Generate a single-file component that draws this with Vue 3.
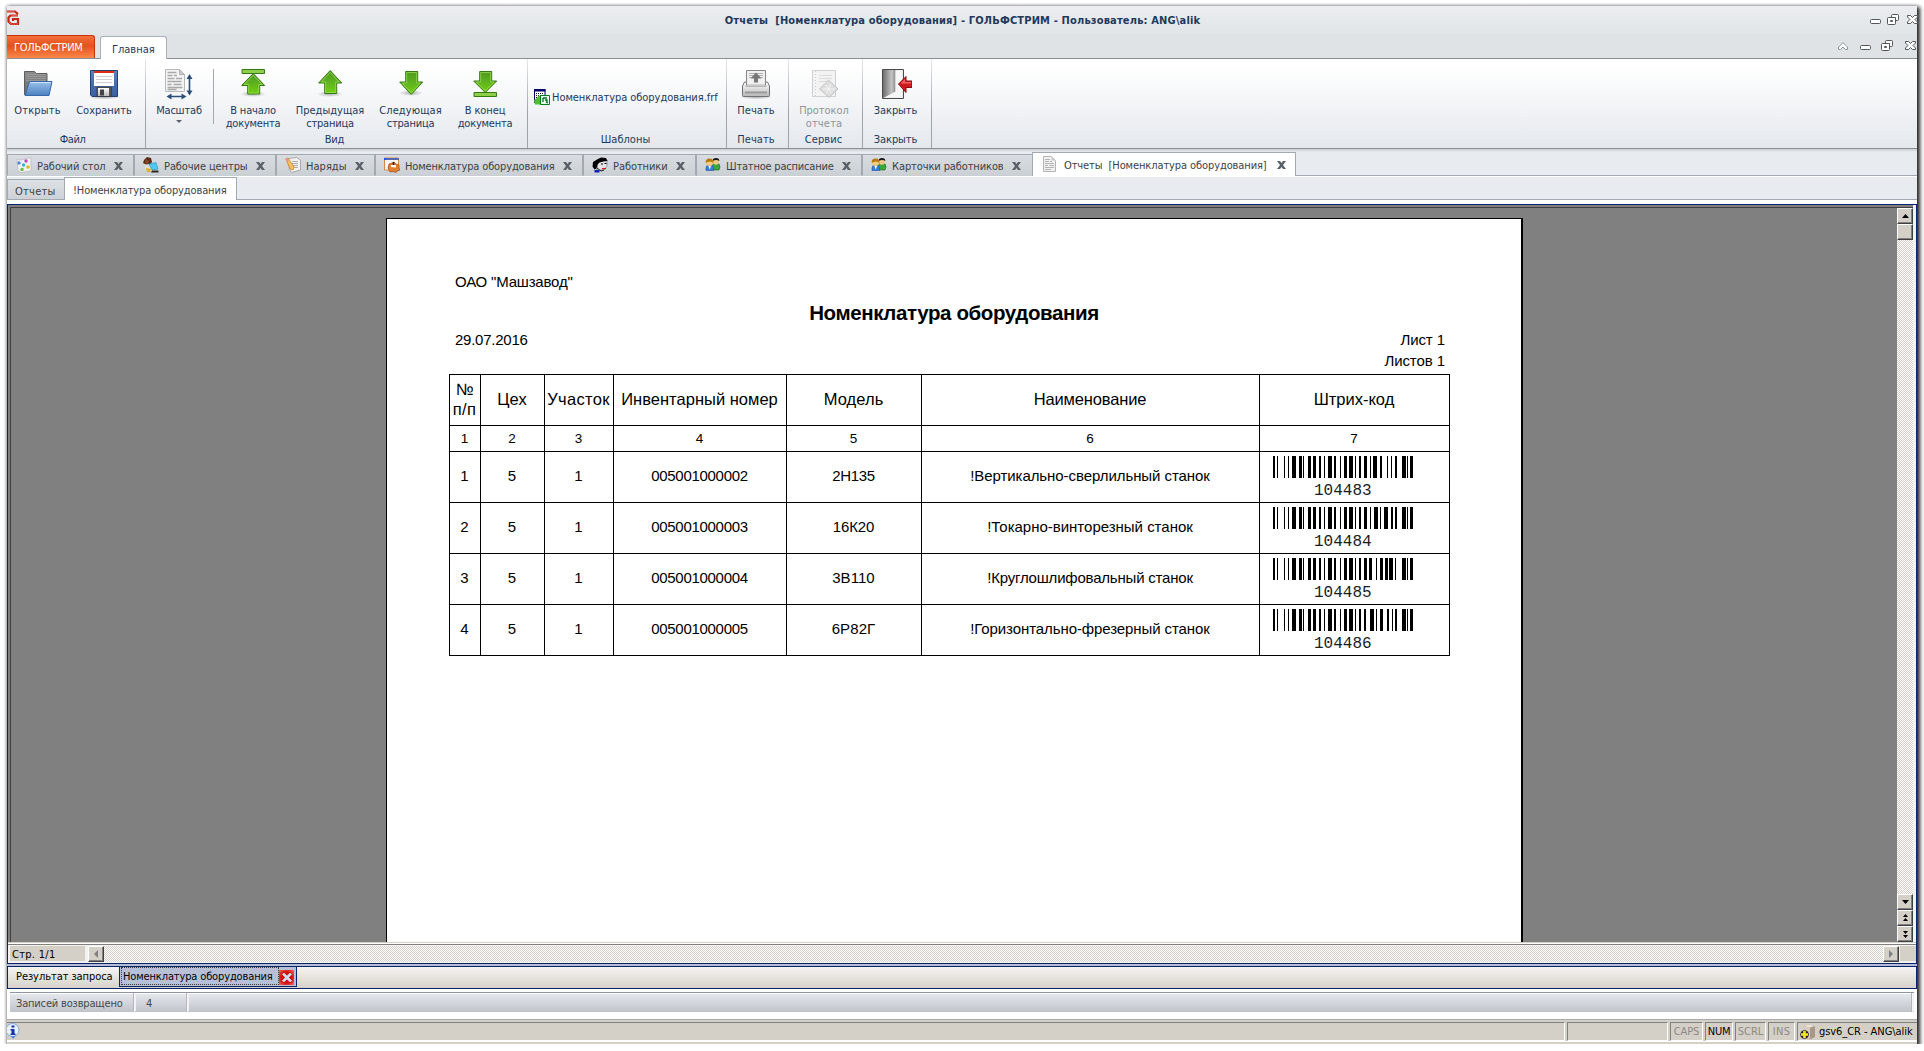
<script setup>
// Spreads the letters of a label so that it takes the given width in pixels.
function fitText(el, { value }) {
  if (!value) return
  el.style.letterSpacing = '0px'
  const count = el.textContent.length
  const natural = el.getBoundingClientRect().width
  const step = (value + 0.6 - natural) / count
  el.style.letterSpacing = step.toFixed(3) + 'px'
}
const vFit = { mounted: fitText }

const groups = [
  {
    id: 'file', label: 'Файл', fit: 25, labelWidth: 131, width: 139,
    buttons: [
      { icon: 'open', width: 61, lines: [['Открыть', 46]] },
      { icon: 'save', width: 72, lines: [['Сохранить', 55]] },
    ],
  },
  {
    id: 'view', label: 'Вид', fit: 19, labelWidth: 377, width: 382,
    buttons: [
      { icon: 'scale', width: 66, lines: [['Масштаб', 45]], drop: true },
      { icon: 'first', width: 76, lines: [['В начало', 45], ['документа', 54]], split: true },
      { icon: 'prev', width: 78, lines: [['Предыдущая', 68], ['страница', 47]] },
      { icon: 'next', width: 83, lines: [['Следующая', 62], ['страница', 47]] },
      { icon: 'last', width: 66, lines: [['В конец', 40], ['документа', 54]] },
    ],
  },
  { id: 'tpl', label: 'Шаблоны', fit: 49, labelWidth: 195, width: 199, buttons: [], template: 'Номенклатура оборудования.frf' },
  { id: 'print', label: 'Печать', fit: 37, labelWidth: 58, width: 62, buttons: [{ icon: 'print', width: 58, lines: [['Печать', 37]] }] },
  {
    id: 'service', label: 'Сервис', fit: 37, labelWidth: 69, width: 74,
    buttons: [{ icon: 'log', width: 70, disabled: true, lines: [['Протокол', 49], ['отчета', 36]] }],
  },
  { id: 'close', label: 'Закрыть', fit: 43, labelWidth: 65, width: 69, buttons: [{ icon: 'exit', width: 65, lines: [['Закрыть', 43]] }] },
]

const tabs = [
  { icon: 'desk', title: 'Рабочий стол', fit: 68, width: 128 },
  { icon: 'centers', title: 'Рабочие центры', fit: 83, width: 142 },
  { icon: 'orders', title: 'Наряды', fit: 40, width: 99 },
  { icon: 'nomen', title: 'Номенклатура оборудования', fit: 149, width: 208 },
  { icon: 'worker', title: 'Работники', fit: 54, width: 113 },
  { icon: 'people', title: 'Штатное расписание', fit: 107, width: 166 },
  { icon: 'people', title: 'Карточки работников', fit: 111, width: 169 },
  { icon: 'doc', title: 'Отчеты  [Номенклатура оборудования]', fit: 202, width: 264, active: true },
]

const columns = [
  ['№', 17, 'п/п', 23],
  ['Цех', 29],
  ['Участок', 62],
  ['Инвентарный номер', 156],
  ['Модель', 59],
  ['Наименование', 112],
  ['Штрих-код', 80],
]

const head = [[0, 2], [4, 1], [11, 1], [15, 1], [19, 4], [26, 3], [30, 1], [35, 3], [40, 3], [46, 2], [51, 1], [55, 4], [61, 2], [67, 1], [71, 3], [76, 4], [82, 1], [86, 2]]
const tail = [[129, 4], [134, 1], [137, 3]]
const rows = [
  { model: '2Н135', mf: 42, inv: '005001000002', name: '!Вертикально-сверлильный станок', nf: 239, code: '104483', bars: [[91, 3], [97, 1], [100, 4], [107, 2], [114, 1], [118, 1], [122, 2]] },
  { model: '16К20', mf: 41, inv: '005001000003', name: '!Токарно-винторезный станок', nf: 205, code: '104484', bars: [[91, 3], [97, 1], [101, 4], [107, 1], [111, 4], [118, 2], [122, 2]] },
  { model: '3В110', mf: 42, inv: '005001000004', name: '!Круглошлифовальный станок', nf: 205, code: '104485', bars: [[91, 3], [96, 3], [103, 1], [107, 3], [112, 3], [116, 4], [122, 1]] },
  { model: '6Р82Г', mf: 43, inv: '005001000005', name: '!Горизонтально-фрезерный станок', nf: 239, code: '104486', bars: [[91, 2], [97, 4], [103, 1], [107, 3], [114, 2], [119, 1], [122, 2]] },
]
const barPath = (bars) => [...head, ...bars, ...tail].map(([x, w]) => `M${x} 0h${w}v22h-${w}z`).join('')
</script>

<template>
  <div class="window">
    <svg class="sprite" width="0" height="0">
      <defs>
        <linearGradient id="green" x1="0" y1="0" x2="0" y2="1"><stop offset="0" stop-color="#4f9a1c" /><stop offset=".45" stop-color="#5db01f" /><stop offset="1" stop-color="#72d010" /></linearGradient>
        <linearGradient id="blue" x1="0" y1="0" x2="0" y2="1"><stop offset="0" stop-color="#9cc2ec" /><stop offset="1" stop-color="#4a80c0" /></linearGradient>
        <linearGradient id="grey" x1="0" y1="0" x2="0" y2="1"><stop offset="0" stop-color="#8c8c8c" /><stop offset="1" stop-color="#6c6c6c" /></linearGradient>
        <linearGradient id="light" x1="0" y1="0" x2="0" y2="1"><stop offset="0" stop-color="#ffffff" /><stop offset="1" stop-color="#b8b8b8" /></linearGradient>
        <linearGradient id="door" x1="0" y1="0" x2="1" y2="0"><stop offset="0" stop-color="#6e6e6e" /><stop offset=".7" stop-color="#c4c4c4" /><stop offset="1" stop-color="#8a8a8a" /></linearGradient>
        <linearGradient id="disk" x1="0" y1="0" x2="0" y2="1"><stop offset="0" stop-color="#5a80bd" /><stop offset="1" stop-color="#3a5f9f" /></linearGradient>
        <radialGradient id="shade"><stop offset="0" stop-color="#000" stop-opacity=".3" /><stop offset="1" stop-color="#000" stop-opacity="0" /></radialGradient>
      </defs>
      <symbol id="i-open" viewBox="0 0 32 32">
        <path d="M2.500 26.500V3.500h10l2 2h10.500v21z" fill="url(#grey)" stroke="#5e5e5e" />
        <path d="M4 6.500h20M4 8.500h20M4 10.500h20M4 12.500h20" stroke="#a0a0a0" stroke-width=".7" />
        <path d="M7.500 13.500h22.500l-3 14H3z" fill="url(#blue)" stroke="#3868a8" />
        <path d="M8.300 14.500h20.500" stroke="#cfe2f8" />
      </symbol>
      <symbol id="i-save" viewBox="0 0 32 32">
        <ellipse cx="16" cy="29" rx="16" ry="2.500" fill="url(#shade)" />
        <path d="M2.500 2.500h27v26H4l-1.500-1.500z" fill="url(#disk)" stroke="#26406f" />
        <path d="M6 3h20v15H6z" fill="#fdfdfd" /><path d="M6 3h20v2H6z" fill="#e02a10" />
        <path d="M8 8.500h16M8 11.500h16M8 14.500h16" stroke="#cfcfcf" />
        <path d="M9 19h14.500v9.500H9z" fill="#555" stroke="#333" stroke-width=".6" /><path d="M10 20h11v8H10z" fill="url(#light)" /><path d="M12 21.500h4v6h-4z" fill="#444" />
      </symbol>
      <symbol id="i-scale" viewBox="0 0 32 32">
        <path d="M2.500 1.500h14l5 5v17h-19z" fill="#f4f4f4" stroke="#b8b8b8" /><path d="M16.500 1.500v5h5z" fill="#ccc" stroke="#b0b0b0" />
        <path d="M4.500 4.500h9M4.500 7.500h5M11 7.500h3M4.500 10.500h7M13 10.500h6M4.500 13.500h14M4.500 16.500h4M10.500 16.500h8M4.500 19.500h15M4.500 21.500h9" stroke="#a8a8a8" stroke-width="1.500" />
        <path d="M26.500 9v16M7 28.500h13" stroke="#2c4f78" stroke-width="1.600" />
        <path d="M26.500 6l3 5h-6zM26.500 27.500l3-5h-6zM3.500 28.500l5-3v6zM23.500 28.500l-5-3v6z" fill="#2c4f78" />
      </symbol>
      <symbol id="i-first" viewBox="0 0 32 32">
        <ellipse cx="16" cy="26" rx="13" ry="3" fill="url(#shade)" />
        <path d="M5 1.500h22.500v4H5z" fill="#8fce48" stroke="#347a12" />
        <path d="M16.200 5.500l11.500 12h-5v8.500h-12v-8.500h-6z" fill="url(#green)" stroke="#347a12" />
        <path d="M16.200 7.200l9 9.300h-3.500v8.500h-10v-8.500h-4.500z" fill="none" stroke="#a4dc62" stroke-width=".7" />
      </symbol>
      <symbol id="i-prev" viewBox="0 0 32 32">
        <ellipse cx="16" cy="26" rx="13" ry="3" fill="url(#shade)" />
        <path d="M16.200 2.500l11.500 12.500h-5v10.500h-12v-10.500h-6z" fill="url(#green)" stroke="#347a12" />
        <path d="M16.200 4.200l9 9.800h-3.500v10.500h-10v-10.500h-4.500z" fill="none" stroke="#a4dc62" stroke-width=".7" />
      </symbol>
      <symbol id="i-next" viewBox="0 0 32 32">
        <ellipse cx="16" cy="25" rx="12" ry="3" fill="url(#shade)" />
        <path d="M16.200 26.500l11.500-12.500h-5v-10.500h-12v10.500h-6z" fill="url(#green)" stroke="#347a12" />
        <path d="M16.200 24.800l9-9.800h-3.500v-10.500h-10v10.500h-4.500z" fill="none" stroke="#a4dc62" stroke-width=".7" />
      </symbol>
      <symbol id="i-last" viewBox="0 0 32 32">
        <path d="M16.200 24.500l11.500-11.500h-5v-9.500h-12v9.500h-6z" fill="url(#green)" stroke="#347a12" />
        <path d="M16.200 22.800l9-8.800h-3.500v-9.500h-10v9.500h-4.500z" fill="none" stroke="#a4dc62" stroke-width=".7" />
        <path d="M5 24.500h22.500v4H5z" fill="#8fce48" stroke="#347a12" />
      </symbol>
      <symbol id="i-print" viewBox="0 0 32 32">
        <ellipse cx="16" cy="29" rx="16" ry="2.500" fill="url(#shade)" />
        <path d="M4.500 14h23l2 4v9.500q0 1-1 1h-25q-1 0-1-1V18z" fill="url(#light)" stroke="#707070" />
        <path d="M6.500 2.500h19v15h-19z" fill="#f0f0f0" stroke="#858585" />
        <path d="M9 5.500h14M9 7.500h14M9 9.500h14" stroke="#b0b0b0" />
        <path d="M16 4.500l5.500 6h-3.500v4h-4v-4h-3.500z" fill="#777" />
        <path d="M6 17h20v1.500H6z" fill="#ddd" stroke="#999" stroke-width=".6" /><path d="M5 23.500h22v2H5z" fill="#999" />
      </symbol>
      <symbol id="i-log" viewBox="0 0 32 32">
        <path d="M4.500 2.500h23v26h-23z" fill="#f3f3f3" stroke="#d0d0d0" /><path d="M7.500 3v25" stroke="#d0d0d0" stroke-dasharray="1 2" />
        <path d="M11 7.500h13M11 10.500h13M11 13.500h8" stroke="#dcdcdc" />
        <path d="M20.500 12l9.500 9-9 8.500L11.500 21z" fill="#dedede" stroke="#c2c2c2" /><path d="M15 21h11.500M18 17l5 8M23 16l-5 10" stroke="#f5f5f5" />
      </symbol>
      <symbol id="i-exit" viewBox="0 0 32 32">
        <path d="M2.500 1.500h21v29h-21z" fill="#e8e8e8" stroke="#4a4a4a" /><path d="M3 2h12.500v22L3 30z" fill="url(#door)" /><path d="M15.500 2.500h6.500v27H5l10.500-6z" fill="#f6f6f6" />
        <path d="M18.500 16l7.500-7.500v4.500h6v6.500H26v5z" fill="#d01820" stroke="#8a0c10" /><path d="M20.500 15.500l4.500-4.500v3h6v1.500z" fill="#f06060" />
      </symbol>
      <symbol id="i-tpl" viewBox="0 0 16 16">
        <path d="M.5.5h10.500v13H.5z" fill="#fff" stroke="#00006e" /><path d="M0 0h11.500v2.500H0z" fill="#00006e" />
        <path d="M2 4.500h8M2 6.500h8M2 8.500h8" stroke="#111" stroke-dasharray="1 1" />
        <path d="M0 11l3-2 2-3 2 3v6.500H1z" fill="#4cc030" /><path d="M6.500 6.500h9v9h-9z" fill="#e8ffe8" stroke="#008020" /><path d="M9 9h4M9 9v4M11 11h2v2M12 13l2 1" stroke="#00762a" fill="none" stroke-width="1.300" />
      </symbol>
      <symbol id="i-desk" viewBox="0 0 16 16">
        <path d="M1 2l4 1 10-2.500V14L5 15.500 2 14z" fill="#f1f1f3" stroke="#bdbdc2" stroke-width=".8" />
        <circle cx="10" cy="4" r="1.700" fill="#c048c0" /><circle cx="3" cy="6" r="1.700" fill="#5088e0" /><circle cx="7.500" cy="8" r="1.700" fill="#30b8d8" /><circle cx="12" cy="10" r="1.700" fill="#d8b820" /><circle cx="6" cy="12.500" r="1.800" fill="#70c040" />
      </symbol>
      <symbol id="i-centers" viewBox="0 0 16 16">
        <path d="M1 3l3-3 4 1 1 4-2 3H4L0 6z" fill="#5a2c18" /><path d="M3 2l3 2-1 3-3-1z" fill="#8a4a28" /><path d="M1 8l5-1 3 4-1 3H3z" fill="#ddd" /><path d="M3 11l5 1-1 3H4z" fill="#e0b020" />
        <path d="M6 7l7-1.500L15 12l-6 1z" fill="#50c8f0" stroke="#2090c0" stroke-width=".6" /><path d="M9 13.500h6.500v2H8z" fill="#2a2a2a" />
      </symbol>
      <symbol id="i-orders" viewBox="0 0 16 16">
        <path d="M3.500 1.500l8-1 4 2.500v10l-9 2.500-2-3z" fill="#f2f2f2" stroke="#999" stroke-width=".8" /><path d="M7 4.500h6M7 6.500h6M8 8.500h5M9 10.500h4" stroke="#999" stroke-width=".8" />
        <path d="M1 2l2-1 6 9-1 3-3-1z" fill="#f4c060" stroke="#c07820" stroke-width=".7" /><path d="M0 2l2-1.500L4 3 2 4.500z" fill="#f09090" />
      </symbol>
      <symbol id="i-nomen" viewBox="0 0 16 16">
        <path d="M.5 1h14v12H.5z" fill="#f7f7f7" stroke="#d08848" /><path d="M0 1h15v2H0z" fill="#5868b0" /><path d="M0 1h2v2H0z" fill="#2050f0" />
        <path d="M5 7l3-1 2-1 2 2 3 1v3l1 2-3 1-1 1.500-3-1-3 .5-1-2-1-2z" fill="#e08030" stroke="#a04818" stroke-width=".7" /><path d="M9.500 5v5" stroke="#222" stroke-width="1.500" /><path d="M7 8v2l5 .5V8" fill="#fff" />
      </symbol>
      <symbol id="i-worker" viewBox="0 0 16 16">
        <path d="M6 4l9-1v6l-3 4H5z" fill="#e4e4e4" stroke="#555" stroke-width=".5" />
        <path d="M1 5l4-2.500L9 .5l5 .5 1.500 3-4 .5-4 1-2 2-1 4-2 1-2-3zM9 6.500h2v1H9zM12.500 6h2v1h-2z" fill="#000" /><path d="M10 11h4v1.200h-4z" fill="#c02020" /><path d="M5 11l4 3 3-1" fill="none" stroke="#222" /><path d="M2.500 13h5v2.500h-5z" fill="#1020b0" />
      </symbol>
      <symbol id="i-people" viewBox="0 0 16 16">
        <path d="M7 9.500q0-3.500 4-3.500t4 4l-1 3H8z" fill="#38a838" stroke="#186818" stroke-width=".6" /><circle cx="11" cy="4.800" r="3" fill="#f0c888" /><path d="M7.500 4q0-3 3.500-3t3.300 3q-3-2-6.800 0z" fill="#181818" />
        <path d="M1 13.500V11q0-3 3.500-3.500T8.500 11v2.500z" fill="#3880d8" stroke="#1850a0" stroke-width=".6" /><circle cx="4.500" cy="5.500" r="3.500" fill="#f4cc80" /><path d="M.7 6q-.5-4.500 3.800-4.500T8.300 6q-3-3-7.600 0z" fill="#b87810" /><path d="M3.500 9l1.200 3.500L6 9z" fill="#fff" />
      </symbol>
      <symbol id="i-doc" viewBox="0 0 16 16">
        <path d="M1.500.5h8l4 4v11h-12z" fill="#f1f1f1" stroke="#b4b4b4" /><path d="M9.500.5v4h4z" fill="#ccc" /><path d="M3 3.500h5M3 5.500h4M8 5.500h2M3 7.500h9M3 9.500h3M7.500 9.500h4.500M3 11.500h9M3 13.500h6" stroke="#b4b4b4" />
      </symbol>
      <symbol id="i-x" viewBox="0 0 9 8"><path d="M0 0h3l1.500 2L6 0h3L6 4l3 4H6L4.500 6 3 8H0l3-4z" fill="#5a6068" /></symbol>
      <symbol id="w-min" viewBox="0 0 11 11"><rect x=".5" y="5.500" width="10" height="4" rx="1" fill="#fff" stroke="#50565c" /></symbol>
      <symbol id="w-restore" viewBox="0 0 12 11">
        <path d="M4.500 3.500v-2q0-1 1-1h5q1 0 1 1v4q0 1-1 1h-2v-3z" fill="#fff" stroke="#50565c" /><rect x=".5" y="3.500" width="8" height="7" rx="1" fill="#fff" stroke="#50565c" /><path d="M3.500 6.500h2v1h-2zM7.500 3.500h1" fill="#fff" stroke="#50565c" />
      </symbol>
      <symbol id="w-close" viewBox="0 0 11 9"><path d="M.5.500h3l2 2 2-2h3v1.500l-2.500 2.500 2.500 2.500v1.500h-3l-2-2-2 2h-3v-1.500L3 4.500.500 2z" fill="#fff" stroke="#50565c" /></symbol>
      <symbol id="w-up" viewBox="0 0 10 8"><path d="M.5 6q0-1 1-2L5 .700 8.500 4q1 1 1 2v1.500h-2L5 5 2.500 7.500h-2z" fill="#fff" stroke="#8a94a2" /></symbol>
    </svg>

    <header class="title">
      <svg class="logo" width="13" height="16" viewBox="0 0 13 16">
        <path d="M0 1.500h8l3 2.500M11 5.500H3.500L1.500 7.500v4L4 14h7V9H6v2" fill="none" stroke="#c82414" stroke-width="2.200" /><path d="M0 1.500h7.500M4.500 5.500H11M2 12l2.500 2H11" fill="none" stroke="#f08070" stroke-width=".6" />
      </svg>
      <b v-fit="475">Отчеты&nbsp; [Номенклатура оборудования] - ГОЛЬФСТРИМ - Пользователь: ANG\alik</b>
      <div class="winbtns">
        <svg width="11" height="11"><use href="#w-min" /></svg>
        <svg width="12" height="11"><use href="#w-restore" /></svg>
        <svg width="11" height="9"><use href="#w-close" /></svg>
      </div>
    </header>

    <nav class="menu">
      <div class="appbtn"><span v-fit="68">ГОЛЬФСТРИМ</span></div>
      <div class="menutab"><span v-fit="42">Главная</span></div>
      <div class="winbtns inner">
        <svg width="10" height="8"><use href="#w-up" /></svg>
        <svg width="11" height="11"><use href="#w-min" /></svg>
        <svg width="12" height="11"><use href="#w-restore" /></svg>
        <svg width="11" height="9"><use href="#w-close" /></svg>
      </div>
    </nav>

    <section class="ribbon">
      <div v-for="g in groups" :key="g.id" class="group" :style="{ width: g.width + 'px' }">
        <div class="buttons">
          <div v-for="b in g.buttons" :key="b.icon" class="btn" :class="{ disabled: b.disabled, split: b.split }" :style="{ width: b.width + 'px' }">
            <svg width="32" height="32"><use :href="'#i-' + b.icon" /></svg>
            <span v-for="l in b.lines" :key="l[0]" v-fit="l[1]">{{ l[0] }}</span>
            <i v-if="b.drop" class="drop"></i>
          </div>
          <div v-if="g.template" class="template">
            <svg width="16" height="16"><use href="#i-tpl" /></svg>
            <span v-fit="165">{{ g.template }}</span>
          </div>
        </div>
        <div class="glabel" :style="{ width: g.labelWidth + 'px' }"><span v-fit="g.fit">{{ g.label }}</span></div>
      </div>
    </section>

    <nav class="tabs">
      <div v-for="t in tabs" :key="t.title" class="tab" :class="{ active: t.active }" :style="{ width: t.width + 'px' }">
        <svg width="16" height="16"><use :href="'#i-' + t.icon" /></svg>
        <span v-fit="t.fit">{{ t.title }}</span>
        <svg class="x" width="9" height="8"><use href="#i-x" /></svg>
      </div>
    </nav>

    <nav class="subtabs">
      <div class="subtab"><span v-fit="40">Отчеты</span></div>
      <div class="subtab active"><span v-fit="153">!Номенклатура оборудования</span></div>
    </nav>

    <section class="viewer">
      <div class="viewrow">
        <div class="canvas">
          <article class="page">
            <div class="org"><span v-fit="117">ОАО "Машзавод"</span></div>
            <h1><span v-fit="289">Номенклатура оборудования</span></h1>
            <div class="meta">
              <span v-fit="72">29.07.2016</span>
              <div class="sheets"><span v-fit="44">Лист 1</span><span v-fit="60">Листов 1</span></div>
            </div>
            <div class="table">
              <div v-for="c in columns" :key="c[0]" class="cell th">
                <span v-fit="c[1]">{{ c[0] }}</span>
                <span v-if="c[2]" v-fit="c[3]">{{ c[2] }}</span>
              </div>
              <div v-for="n in 7" :key="n" class="cell num">{{ n }}</div>
              <template v-for="(r, i) in rows" :key="r.code">
                <div class="cell">{{ i + 1 }}</div>
                <div class="cell">5</div>
                <div class="cell">1</div>
                <div class="cell"><span v-fit="96">{{ r.inv }}</span></div>
                <div class="cell"><span v-fit="r.mf">{{ r.model }}</span></div>
                <div class="cell"><span v-fit="r.nf">{{ r.name }}</span></div>
                <div class="cell code">
                  <svg width="140" height="22" shape-rendering="crispEdges"><path :d="barPath(r.bars)" /></svg>
                  <span>{{ r.code }}</span>
                </div>
              </template>
            </div>
          </article>
        </div>
        <div class="vscroll">
          <div class="sb"><svg width="7" height="4"><path d="M0 4L3.500 0 7 4z" /></svg></div>
          <div class="sb thumb"></div>
          <div class="track"></div>
          <div class="sb"><svg width="7" height="4"><path d="M0 0L3.500 4 7 0z" /></svg></div>
          <div class="sb"><svg width="5" height="8"><path d="M0 3L2.500 0 5 3zM0 7L2.500 4 5 7z" /></svg></div>
          <div class="sb"><svg width="5" height="8"><path d="M0 1h5L2.500 4zM0 5h5L2.500 8z" /></svg></div>
        </div>
      </div>
      <div class="hrow">
        <div class="pageno"><span v-fit="43">Стр. 1/1</span></div>
        <div class="sb off"><svg width="4" height="8"><path d="M4 0v8L0 4z" /></svg></div>
        <div class="track"></div>
        <div class="sb off"><svg width="4" height="8"><path d="M0 0v8l4-4z" /></svg></div>
        <div class="corner"></div>
      </div>
    </section>

    <nav class="results">
      <div class="rtab"><span v-fit="96">Результат запроса</span></div>
      <div class="rtab active">
        <div class="focus"><span v-fit="149">Номенклатура оборудования</span></div>
        <div class="redx"><svg width="10" height="9" viewBox="0 0 10 9"><path d="M1 .500l8 8M9 .500l-8 8" stroke="#d4dcec" stroke-width="2.600" /></svg></div>
      </div>
    </nav>

    <div class="records">
      <div class="rec first"><span v-fit="106">Записей возвращено</span></div>
      <div class="rec second">4</div>
      <div class="rec rest"></div>
    </div>

    <footer class="status">
      <div class="cellbox main">
        <svg width="14" height="16" viewBox="0 0 14 16"><circle cx="5.500" cy="7" r="6.500" fill="#e8f2ff" stroke="#80a8e0" /><path d="M4 13l2 3 2.500-3z" fill="#5088d8" /><path d="M4.500 2.500h3v2h-3zM3.500 6h4v4.500h1V12h-5v-1.500h1v-3h-1z" fill="#1830a0" /></svg>
      </div>
      <div class="cellbox blank"></div>
      <div class="cellbox caps"><span v-fit="25">CAPS</span></div>
      <div class="cellbox nums on"><span v-fit="22">NUM</span></div>
      <div class="cellbox scrl"><span v-fit="25">SCRL</span></div>
      <div class="cellbox ins"><span v-fit="17">INS</span></div>
      <div class="cellbox user on">
        <svg width="16" height="16" viewBox="0 0 16 16"><path d="M3 2l6-1.500L15 2v11l-5 2.500L3 13z" fill="#a89888" /><path d="M3 2l7 1.500V15L3 13z" fill="#d8ccc0" /><path d="M3 2l6-1.500L15 2l-5 1.500z" fill="#ece4dc" /><circle cx="4.500" cy="10.500" r="4.300" fill="#222" /><path d="M3.200 7h2.600v2.200H8v2.600H5.800V14H3.200v-2.200H1V9.200h2.200z" fill="#f8e820" /></svg>
        <span v-fit="93">gsv6_CR - ANG\alik</span>
      </div>
    </footer>
  </div>
</template>

<style>
html, body { background: #fff; overflow: hidden; }
</style>

<style scoped>
* { box-sizing: border-box; }
.window {
  width: 1910px; height: 1038px; margin: 6px 0 0 7px;
  display: flex; flex-direction: column;
  font: 11px/13px "DejaVu Sans Condensed", "DejaVu Sans", sans-serif; font-stretch: condensed;
  color: #1e395b; background: #fff; white-space: pre;
  box-shadow: 2px 2px 4px 1px rgba(0, 0, 0, .85), 0 0 4px rgba(0, 0, 0, .25);
  clip-path: inset(-3px -7px -7px -3px);
}
svg { display: block; flex: none; }
.sprite { position: absolute; }

.title { height: 29px; flex: none; display: grid; grid-template-columns: 1fr auto 1fr; background: linear-gradient(#ebedf0, #e1e5e8); }
.title b { margin: 8px 0 0 1px; }
.logo { margin-top: 4px; }
.winbtns { display: flex; justify-content: flex-end; gap: 6px; margin-top: 8px; }
.winbtns svg:last-child { margin: 1px 0 0 2px; }
.title .winbtns { margin-right: -1px; overflow: hidden; }

.menu { height: 24px; flex: none; display: flex; background: #dfe3e6; box-shadow: inset 0 -1px #8b9097; }
.winbtns.inner { margin: 5px 1px 0 auto; gap: 10px; }
.winbtns.inner svg:first-child { margin: 2px 2px 0 0; }
.winbtns.inner svg:last-child { margin-left: 2px; }
.appbtn { width: 88px; height: 23px; padding: 5px 0 0 7px; color: #fff; border: 1px solid #c8350e; border-left: 0; border-bottom: 0; border-radius: 0 3px 0 0; background: linear-gradient(#f2703a, #e4511c 45%, #f98848); }
.menutab { width: 67px; margin: 1px 0 0 5px; padding: 6px 0 0 11px; border: 1px solid #a9b0b8; border-bottom: 0; border-radius: 3px 3px 0 0; background: #fff; }

.ribbon { height: 90px; flex: none; display: flex; background: linear-gradient(#fff 10%, #e4e8ed); border-bottom: 1px solid #8b9097; }
.group { flex: none; display: flex; flex-direction: column; border-right: 1px solid; border-image: linear-gradient(#e8eaee, #9da2a9 60%, #a0a5ac) 1; }
.buttons { height: 74px; display: flex; }
.btn { flex: none; display: flex; flex-direction: column; align-items: center; padding-top: 9px; }
.btn svg { margin-bottom: 4px; }
.btn.split { position: relative; margin-left: 3px; }
.btn.split::before { content: ""; position: absolute; left: -2px; top: 10px; width: 1px; height: 55px; background: #a3a8af; }
.disabled { color: #909398; }
.drop { margin-top: 3px; border: 3px solid transparent; border-top-color: #5c636c; border-bottom: 0; }
.glabel { text-align: center; }
.template { display: flex; padding: 30px 0 0 6px; gap: 2px; }
.template span { margin-top: 2px; }

.tabs { height: 28px; flex: none; display: flex; align-items: flex-end; color: #3c3f44; background: linear-gradient(#c9cdd2, #e8ebf0 3px); box-shadow: inset 0 -1px #fff, inset 0 -2px #a3a9b3; }
.tab { flex: none; display: flex; height: 22px; margin-bottom: 1px; padding: 2px 0 0 8px; border-top: 1px solid #a3a9b3; border-right: 2px solid #a3a9b3; border-bottom: 1px solid #c9ced4; background: linear-gradient(#d9dde2, #cbd0d5); }
.tab:first-child { border-left: 1px solid #a3a9b3; }
.tab span { margin: 3px 0 0 5px; }
.tab .x { margin: 5px 0 0 8px; }
.tab:nth-child(7) { border-right: 0; }
.tab.active { height: 24px; margin-bottom: 1px; padding: 3px 0 0 9px; background: #fff; border: 1px solid #a3a9b3; border-bottom: 0; }
.tab.active span { margin-left: 6px; }
.tab.active .x { margin-left: 10px; }

.subtabs { height: 23px; flex: none; margin-bottom: 4px; display: flex; align-items: flex-end; color: #3c3f44; background: #e8ebf0; box-shadow: inset 0 -1px #a3a9b3; }
.subtab { width: 57px; height: 21px; padding: 5px 0 0 7px; border: 1px solid #a3a9b3; border-right: 0; background: linear-gradient(#dde1e5, #cdd2d7); }
.subtab.active { width: 173px; height: 23px; border-right: 1px solid #a3a9b3; border-bottom: 0; background: #fff; padding: 6px 0 0 8px; }

.viewer { height: 760px; flex: none; display: flex; flex-direction: column; border: 1px solid #0a246a; background: #808080; color: #000; }
.viewrow { height: 737px; display: flex; margin-left: 2px; padding-top: 2px; border-right: 3px solid #f4f2ee; }
.canvas { flex: 1; height: 735px; overflow: hidden; padding: 10px 0 0 375px; border: solid #404040; border-width: 1px 0 0 1px; background: #808080; }
.vscroll { width: 16px; display: flex; flex-direction: column; border-top: 1px solid #404040; }
.sb { width: 16px; height: 16px; flex: none; display: flex; align-items: center; justify-content: center; background: #d4d0c8; border: 1px solid; border-color: #fff #404040 #404040 #fff; box-shadow: inset -1px -1px #808080; }
.sb.off { fill: #808080; }
.track { flex: 1; background: repeating-conic-gradient(#fff 0 25%, #d4d0c8 0 50%) 0 0 / 2px 2px; }
.hrow { height: 21px; display: flex; background: #f4f2ee; border-top: 1px solid #d4d0c8; padding: 3px 0 2px 2px; box-shadow: inset 0 1px #fff, inset 0 2px #808080; }
.hrow .track { height: 16px; }
.pageno { width: 75px; margin-right: 3px; padding: 2px 0 0 2px; background: #d4d0c8; }
.corner { width: 16px; margin-left: 1px; background: #d4d0c8; }

.page { width: 1137px; height: 760px; padding: 54px 72px 0 62px; background: #fff; border: 1px solid #000; border-right-width: 2px; font: 15px/17px "Liberation Sans", Arial, sans-serif; }
.org { height: 17px; padding-left: 6px; }
h1 { margin: 11px 0 0; padding-left: 10px; font-size: 20.5px; line-height: 24px; text-align: center; }
.meta { height: 49px; margin-top: 6px; padding: 0 4px 0 6px; display: flex; justify-content: space-between; }
.sheets { display: flex; flex-direction: column; align-items: flex-end; gap: 4px; }
.table { width: 1001px; margin-top: -6px; display: grid; grid-template-columns: 31px 64px 69px 173px 135px 338px 190px; grid-template-rows: 51px 26px repeat(4, 51px); border: solid #000; border-width: 1px 0 0 1px; }
.cell { display: flex; flex-direction: column; align-items: center; justify-content: center; padding: 0 1px 3px 0; border: solid #000; border-width: 0 1px 1px 0; }
.th { font-size: 16.5px; line-height: 20px; }
.num { font-size: 13.5px; padding-bottom: 0; }
.code { align-items: flex-start; justify-content: flex-start; padding: 4px 0 0 13px; }
.code span { margin-left: 41px; margin-top: 4px; color: #1c1c1c; font: 16px/18px "Liberation Mono", "Courier New", monospace; }

.results { height: 23px; flex: none; margin-top: 2px; display: flex; color: #000; border: 1px solid #0a246a; background: linear-gradient(#f6f4f2, #d6d2ca); box-shadow: 0 -2px #b4bdd4; }
.rtab { width: 112px; padding: 3px 0 0 8px; }
.rtab.active { width: 178px; height: 20px; padding: 0 1px 0; display: flex; background: #b8c0d8; border: 1px solid #0a246a; border-top: 0; margin-left: -1px; }
.focus { width: 158px; height: 18px; padding: 2px 0 0 1px; border: 1px dotted #403828; }
.redx { width: 15px; height: 15px; margin: 3px 0 0 0; display: flex; align-items: center; justify-content: center; background: radial-gradient(#e00000, #d01010 50%, #f07068); }

.records { height: 20px; flex: none; margin: 3px 3px 7px; display: flex; color: #45484d; border-top: 1px solid #8f94a4; box-shadow: inset 0 1px #fff; background: linear-gradient(#e6e9ee, #c0c4ca); }
.rec { padding-top: 4px; border-right: 1px solid #f4f6f8; box-shadow: 2px 0 0 -1px #eef0f4, inset -2px 0 0 -1px #b4b8be; margin-right: 2px; }
.first { width: 125px; padding-left: 6px; }
.second { width: 51px; padding-left: 9px; }
.rest { flex: 1; margin-right: 1px; }

.status { height: 25px; flex: none; display: flex; gap: 2px; padding-top: 2px; color: #8c8a86; background: #d4d0c8; border-top: 1px solid #a8abb2; box-shadow: inset 0 -2px #d4d0c8, inset 0 -3px #fff; overflow: hidden; }
.cellbox { flex: none; height: 19px; padding-top: 2px; border: 1px solid; border-color: #808080 #fff #fff #808080; text-align: center; }
.main { width: 1558px; padding-top: 0; border-left: 0; }
.blank { width: 101px; }
.caps { width: 33px; }
.nums { width: 28px; }
.scrl { width: 31px; }
.ins { width: 27px; }
.on { color: #000; }
.user { width: 120px; display: flex; gap: 3px; padding: 2px 0 0 2px; border-right: 0; }
.user svg { margin-top: -1px; }
</style>
